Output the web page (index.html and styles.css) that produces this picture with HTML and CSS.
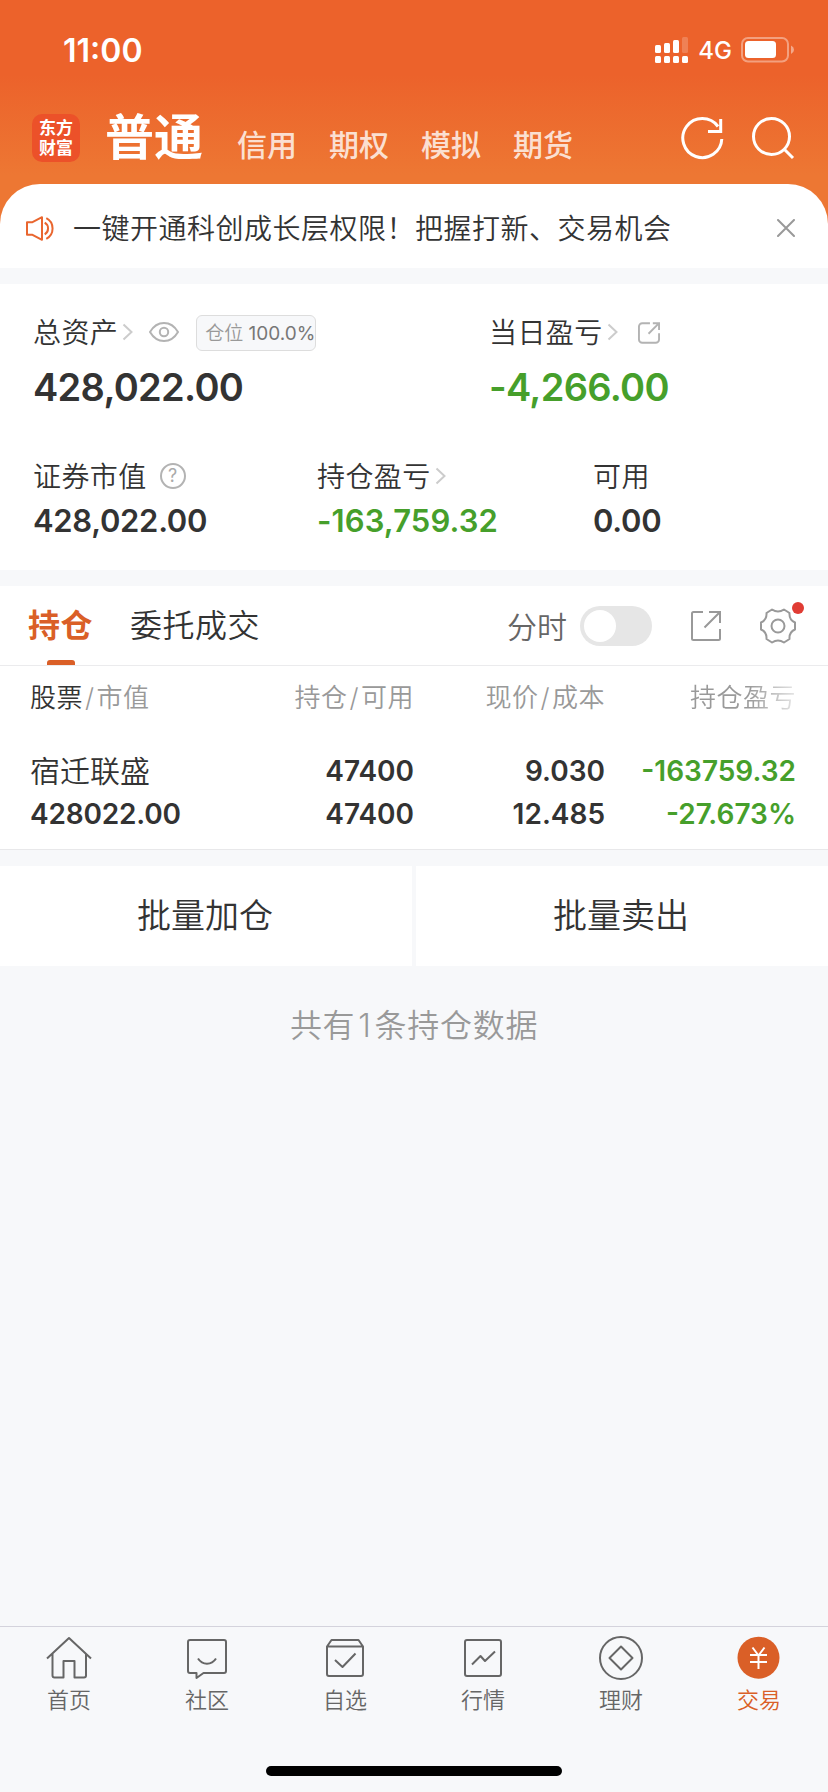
FILE: index.html
```html
<!DOCTYPE html>
<html lang="zh-CN">
<head>
    <meta charset="UTF-8">
    <meta name="viewport" content="width=device-width, initial-scale=1.0">
    <title>交易 - 持仓</title>
    <link rel="stylesheet" href="styles.css">
</head>
<body>
    <header class="header">
        <div class="status-bar">
            <span class="time">11:00</span>
            <div class="status-icons">
                <svg class="signal" width="34" height="27" viewBox="0 0 34 27" fill="#fff">
                    <rect x="0" y="8" width="6" height="8" rx="1.5"/>
                    <rect x="9" y="6" width="6" height="10" rx="1.5"/>
                    <rect x="18" y="3" width="6" height="13" rx="1.5"/>
                    <rect x="27" y="0" width="6" height="16" rx="1.5" opacity=".2"/>
                    <rect x="0" y="19" width="6" height="7" rx="1.5"/>
                    <rect x="9" y="19" width="6" height="7" rx="1.5"/>
                    <rect x="18" y="19" width="6" height="7" rx="1.5"/>
                    <rect x="27" y="19" width="6" height="7" rx="1.5"/>
                </svg>
                <span class="network">4G</span>
                <svg width="54" height="26" viewBox="0 0 54 26">
                    <rect x="1" y="1" width="46" height="23.500" rx="6" fill="none" stroke="#fff" stroke-width="2" opacity=".4"/>
                    <rect x="4" y="4" width="31" height="17" rx="3.500" fill="#fff"/>
                    <path d="M50 8.500q3 1.500 3 4.200t-3 4.200z" fill="#fff" opacity=".45"/>
                </svg>
            </div>
        </div>
        <nav class="account-nav">
            <div class="logo">东方<br>财富</div>
            <span class="account active">普通</span>
            <span class="account">信用</span>
            <span class="account">期权</span>
            <span class="account">模拟</span>
            <span class="account">期货</span>
            <div class="nav-icons">
                <svg width="44" height="44" viewBox="0 0 44 44" fill="none" stroke="#fff" stroke-width="3">
                    <path d="M40.800 23a19.500 19.500 0 1 1-3.800-12.500M39.700 3v12.500H27"/>
                </svg>
                <svg width="44" height="44" viewBox="0 0 44 44" fill="none" stroke="#fff" stroke-width="3">
                    <circle cx="20.500" cy="20.500" r="18"/>
                    <path d="M33 33l9 9"/>
                </svg>
            </div>
        </nav>
    </header>

    <section class="notice">
        <svg width="28" height="25" viewBox="0 0 28 25" fill="none" stroke="#e9662f" stroke-width="2" stroke-linejoin="round">
            <path d="M1 6.200h5.500L16 1.200v22.600l-9.500-5H1z"/>
            <path d="M18.700 6.700a6.700 6.700 0 0 1 0 11.600"/>
            <path d="M20.300 2.200a11.600 11.600 0 0 1 0 20.600"/>
        </svg>
        <p class="notice-text">一键开通科创成长层权限！把握打新、交易机会</p>
        <svg class="close" width="18" height="18" viewBox="0 0 18 18" stroke="#999" stroke-width="2" stroke-linecap="round">
            <path d="M1 1l16 16M17 1L1 17"/>
        </svg>
    </section>

    <section class="assets">
        <div class="assets-row assets-main">
            <div class="asset">
                <div class="asset-label">
                    <span class="label-text">总资产</span>
                    <svg class="arrow" width="12" height="18" viewBox="0 0 12 18"><path d="M1.500 1.500l8 7.500-8 7.500"/></svg>
                    <svg class="eye" width="30" height="20" viewBox="0 0 30 20" fill="none" stroke="#b3b3b3" stroke-width="2">
                        <path d="M1 10C8-2 22-2 29 10 22 22 8 22 1 10z"/>
                        <circle cx="15" cy="10" r="4.200"/>
                    </svg>
                    <span class="position-tag">仓位 <b>100.0%</b></span>
                </div>
                <div class="asset-value">428,022.00</div>
            </div>
            <div class="asset">
                <div class="asset-label">
                    <span class="label-text">当日盈亏</span>
                    <svg class="arrow" width="12" height="18" viewBox="0 0 12 18"><path d="M1.500 1.500l8 7.500-8 7.500"/></svg>
                    <svg class="share-small" width="22" height="22" viewBox="0.500 1 23 22.500" fill="none" stroke="#b3b3b3" stroke-width="2">
                        <path d="M13 2H5a3.500 3.500 0 0 0-3.500 3.500v13.500A3.500 3.500 0 0 0 5 22.500h14a3.500 3.500 0 0 0 3.500-3.500V12.500M16 2h6.500v7M22 2.500L11.500 13"/>
                    </svg>
                </div>
                <div class="asset-value down">-4,266.00</div>
            </div>
        </div>
        <div class="assets-row assets-sub">
            <div class="asset">
                <div class="asset-label">
                    <span class="label-text">证券市值</span>
                    <span class="help">?</span>
                </div>
                <div class="asset-value">428,022.00</div>
            </div>
            <div class="asset">
                <div class="asset-label">
                    <span class="label-text">持仓盈亏</span>
                    <svg class="arrow" width="12" height="18" viewBox="0 0 12 18"><path d="M1.500 1.500l8 7.500-8 7.500"/></svg>
                </div>
                <div class="asset-value down">-163,759.32</div>
            </div>
            <div class="asset">
                <div class="asset-label"><span class="label-text">可用</span></div>
                <div class="asset-value">0.00</div>
            </div>
        </div>
    </section>

    <section class="holdings">
        <div class="tabs">
            <span class="tab active">持仓</span>
            <span class="tab">委托成交</span>
            <div class="tools">
                <span class="tool-label">分时</span>
                <span class="switch"></span>
                <svg class="share" width="32" height="32" viewBox="0 0 32 32" fill="none" stroke="#999" stroke-width="2">
                    <path d="M13 2H3.500A1.500 1.500 0 0 0 2 3.500v25A1.500 1.500 0 0 0 3.500 30h25a1.500 1.500 0 0 0 1.500-1.500V19M19 2h11v11M29.500 2.500L14.500 17.500"/>
                </svg>
                <div class="settings">
                    <svg width="36" height="36" viewBox="0 0 36 36" fill="none" stroke="#999" stroke-width="2" stroke-linejoin="round">
                        <circle cx="18" cy="18" r="6.500"/>
                        <path d="M12 1.500Q18 5.500 24 1.500L29.500 5Q29 12 35 14.500V21.500Q29 24 29.500 31L24 34.500Q18 30.500 12 34.500L6.500 31Q7 24 1 21.500V14.500Q7 12 6.500 5z"/>
                    </svg>
                    <i class="dot"></i>
                </div>
            </div>
        </div>

        <div class="table">
            <div class="table-row table-head">
                <span><b>股票</b><i>/</i>市值</span>
                <span>持仓<i>/</i>可用</span>
                <span>现价<i>/</i>成本</span>
                <span class="fade">持仓盈亏</span>
            </div>
            <div class="table-row stock">
                <span class="stock-name">宿迁联盛</span>
                <span>47400</span>
                <span>9.030</span>
                <span class="down">-163759.32</span>
            </div>
            <div class="table-row stock">
                <span class="stock-value">428022.00</span>
                <span>47400</span>
                <span>12.485</span>
                <span class="down">-27.673%</span>
            </div>
        </div>
    </section>

    <section class="batch">
        <div class="batch-btn">批量加仓</div>
        <div class="batch-btn">批量卖出</div>
    </section>

    <p class="summary">共有<span class="count">1</span>条持仓数据</p>

    <footer class="tab-bar">
        <div class="tab-item">
            <svg width="46" height="46" viewBox="0 0 46 46">
                <path d="M1 23.500L23 3l22 20.500M6.500 19v21.500a2 2 0 0 0 2 2H17.500V26h11v16.500h9.500a2 2 0 0 0 2-2V19"/>
            </svg>
            <span>首页</span>
        </div>
        <div class="tab-item">
            <svg width="46" height="46" viewBox="0 0 46 46">
                <path d="M6 5h34a2 2 0 0 1 2 2v29a2 2 0 0 1-2 2H19.500L12.500 43V38H6a2 2 0 0 1-2-2V7a2 2 0 0 1 2-2zM14 23.500c4.500 7 13.500 7 18 0"/>
            </svg>
            <span>社区</span>
        </div>
        <div class="tab-item">
            <svg width="46" height="46" viewBox="0 0 46 46">
                <path d="M5 11.500h36v27.500a2 2 0 0 1-2 2H7a2 2 0 0 1-2-2zM5 11.500L9.500 5h27l4.500 6.500M13 25l7.500 7L33.500 18.500"/>
            </svg>
            <span>自选</span>
        </div>
        <div class="tab-item">
            <svg width="46" height="46" viewBox="0 0 46 46">
                <rect x="5" y="5" width="36" height="36" rx="2"/>
                <path d="M12 29.500l8.500-8.500 4.500 5L35 16.500"/>
            </svg>
            <span>行情</span>
        </div>
        <div class="tab-item">
            <svg width="46" height="46" viewBox="0 0 46 46">
                <circle cx="23" cy="23" r="21"/>
                <path d="M23 11.500l11.500 11.500L23 34.500 11.500 23z"/>
            </svg>
            <span>理财</span>
        </div>
        <div class="tab-item active">
            <svg width="46" height="46" viewBox="0 0 46 46">
                <circle class="coin" cx="22.500" cy="22.700" r="21"/>
                <path class="yen" d="M16.500 12.500l6 8 6-8M22.500 20.500v13.500M14 20h17M14 27h17"/>
            </svg>
            <span>交易</span>
        </div>
    </footer>
    <div class="home-indicator"></div>
</body>
</html>
```
FILE: styles.css
```css
* {
    box-sizing: border-box;
}

body {
    margin: 0;
    width: 828px;
    height: 1792px;
    display: flex;
    flex-direction: column;
    overflow: hidden;
    background-color: #f7f8fa;
    color: #333;
    font-family: Inter, "Noto Sans CJK SC", sans-serif;
    font-size: 28px;
    font-weight: 350;
}

p {
    margin: 0;
}

svg {
    display: block;
    flex-shrink: 0;
}

.header {
    height: 232px;
    flex-shrink: 0;
    background: linear-gradient(#ec622b 0, #ec622b 75px, #ed7733 175px, #ed7733 232px);
    color: #fff;
}

.status-bar {
    height: 100px;
    display: flex;
    align-items: center;
    justify-content: space-between;
    padding: 0 33px 0 63px;
}

.time {
    font-size: 32px;
    font-weight: 600;
}

.status-icons {
    display: flex;
    align-items: center;
    gap: 9px;
}

.network {
    font-size: 24px;
    font-weight: 500;
}

.account-nav {
    height: 76px;
    display: flex;
    align-items: center;
    padding: 0 33px 0 32px;
}

.logo {
    width: 48px;
    height: 48px;
    margin-right: 25px;
    padding-top: 3px;
    border-radius: 10px;
    background-color: #ec5129;
    font-family: "Noto Sans CJK SC", sans-serif;
    font-size: 17px;
    font-weight: 700;
    line-height: 20px;
    text-align: center;
}

.account {
    margin-left: 32px;
    padding-top: 13px;
    font-size: 30px;
    font-weight: 500;
    line-height: 40px;
    color: rgba(255, 255, 255, .8);
}

.account.active {
    margin: 0 2px 0 0;
    padding-top: 0;
    font-size: 49px;
    font-weight: 700;
    color: #fff;
}

.nav-icons {
    display: flex;
    gap: 26px;
    margin-left: auto;
}

.notice {
    height: 84px;
    margin-top: -48px;
    flex-shrink: 0;
    display: flex;
    align-items: center;
    padding: 4px 33px 0 26px;
    border-radius: 40px 40px 0 0;
    background-color: #fff;
}

.notice-text {
    margin: -3px 0 0 19px;
    letter-spacing: .5px;
}

.close {
    margin-left: auto;
}

.assets {
    height: 286px;
    margin-top: 16px;
    flex-shrink: 0;
    padding: 28px 33px 0;
    background-color: #fff;
}

.assets-row {
    display: grid;
}

.assets-main {
    height: 144px;
    grid-template-columns: 456px 1fr;
}

.assets-sub {
    grid-template-columns: 284px 276px 1fr;
}

.asset-label {
    height: 40px;
    display: flex;
    align-items: center;
}

.label-text {
    margin-top: -3px;
    letter-spacing: .4px;
}

.asset-value {
    font-size: 31px;
    font-weight: 600;
    line-height: 50px;
    letter-spacing: -.3px;
}

.asset-value.down {
    letter-spacing: .1px;
}

.assets-main .asset-value {
    font-size: 38px;
    line-height: 70px;
    letter-spacing: -.7px;
}

.down {
    color: #469f2b;
}

.arrow {
    margin-left: 4px;
    fill: none;
    stroke: #ccc;
    stroke-width: 2;
}

.eye {
    margin-left: 15px;
}

.position-tag {
    width: 120px;
    height: 36px;
    margin: 1px 0 0 17px;
    padding-left: 8px;
    border: 1px solid #ddd;
    border-radius: 6px;
    background-color: #f7f8fa;
    color: #999;
    font-size: 19px;
    line-height: 35px;
    white-space: nowrap;
}

.position-tag b {
    color: #777;
    font-weight: 400;
}

.share-small {
    margin: 1px 0 0 19px;
}

.help {
    width: 26px;
    height: 26px;
    margin-left: 13px;
    border: 2px solid #b3b3b3;
    border-radius: 50%;
    color: #aaa;
    font-size: 18px;
    font-weight: 400;
    line-height: 22px;
    text-align: center;
}

.holdings {
    height: 264px;
    margin-top: 16px;
    flex-shrink: 0;
    border-bottom: 1px solid #e8e8ea;
    background-color: #fff;
}

.tabs {
    height: 80px;
    display: flex;
    align-items: center;
    padding: 0 32px 0 28px;
    border-bottom: 1px solid #ebebed;
}

.tab {
    position: relative;
    margin-right: 37px;
    font-size: 32px;
    letter-spacing: .5px;
    line-height: 79px;
}

.tab.active {
    color: #da5f27;
    font-weight: 700;
}

.tab.active::after {
    content: "";
    position: absolute;
    left: 19px;
    bottom: 0;
    width: 28px;
    height: 5px;
    border-radius: 3px 3px 0 0;
    background-color: #da5f27;
}

.tools {
    display: flex;
    align-items: center;
    margin-left: auto;
}

.tool-label {
    margin-top: -2px;
    color: #666;
    font-size: 30px;
}

.switch {
    width: 72px;
    height: 40px;
    margin-left: 13px;
    padding: 4px;
    border-radius: 20px;
    background-color: #e6e6e6;
}

.switch::before {
    content: "";
    display: block;
    width: 32px;
    height: 32px;
    border-radius: 50%;
    background-color: #fff;
}

.share {
    margin: 0 38px;
}

.settings {
    position: relative;
}

.dot {
    position: absolute;
    top: -6px;
    right: -8px;
    width: 12px;
    height: 12px;
    border-radius: 50%;
    background-color: #e03c34;
}

.table {
    padding: 12px 32px 0 30px;
}

.table-row {
    display: grid;
    grid-template-columns: 191px 193px 191px 191px;
    text-align: right;
}

.table-row span:first-child {
    text-align: left;
}

.table-head {
    height: 72px;
    color: #999;
    font-size: 26px;
    line-height: 40px;
    letter-spacing: .5px;
}

.table-head b {
    color: #333;
    font-weight: 350;
}

.table-head i {
    margin: 0 2px;
    font-style: normal;
}

.fade {
    background: linear-gradient(to right, #999 75%, #e6e6e6 100%);
    -webkit-background-clip: text;
    background-clip: text;
    color: transparent;
}

.stock {
    height: 43px;
    font-size: 28px;
    font-weight: 600;
    line-height: 43px;
}

.stock .stock-name {
    font-size: 30px;
    font-weight: 350;
}

.stock-value {
    letter-spacing: -.2px;
}

.batch {
    height: 100px;
    margin-top: 16px;
    flex-shrink: 0;
    display: grid;
    grid-template-columns: 1fr 1fr;
    gap: 4px;
}

.batch-btn {
    padding-right: 2px;
    background-color: #fff;
    font-size: 34px;
    line-height: 100px;
    text-align: center;
}

.summary {
    padding-top: 35px;
    color: #999;
    font-size: 32px;
    line-height: 50px;
    letter-spacing: .7px;
    text-align: center;
}

.count {
    margin: 0 3px;
}

.tab-bar {
    height: 140px;
    margin-top: auto;
    flex-shrink: 0;
    display: grid;
    grid-template-columns: repeat(6, 1fr);
    padding-top: 8px;
    border-top: 1px solid #d4d3dc;
}

.tab-item {
    display: flex;
    flex-direction: column;
    align-items: center;
    gap: 4px;
    color: #666;
    font-size: 22px;
    line-height: 30px;
}

.tab-item svg {
    fill: none;
    stroke: #666;
    stroke-width: 2;
    stroke-linejoin: round;
}

.tab-item.active {
    color: #da5f27;
}

.tab-item .coin {
    fill: #da5f27;
    stroke: none;
}

.tab-item .yen {
    stroke: #fff;
}

.home-indicator {
    width: 296px;
    height: 10px;
    margin: 0 auto 16px;
    flex-shrink: 0;
    border-radius: 5px;
    background-color: #000;
}
```
